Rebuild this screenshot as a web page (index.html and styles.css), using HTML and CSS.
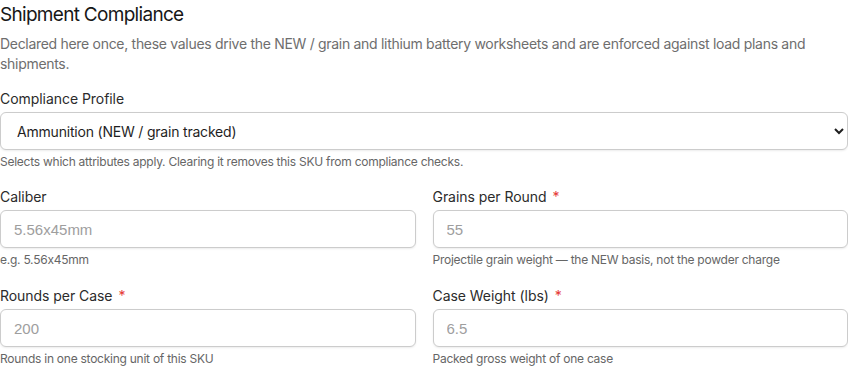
FILE: index.html
```html
<!DOCTYPE html>
<html lang="en">
<head>
    <meta charset="UTF-8">
    <meta name="viewport" content="width=device-width, initial-scale=1.0">
    <title>Shipment Compliance</title>
    <link rel="stylesheet" href="styles.css">
</head>
<body>
    <div class="compliance">
        <h2>Shipment Compliance</h2>
        <p class="intro">Declared here once, these values drive the NEW / grain and lithium battery worksheets and are enforced against load plans and shipments.</p>

        <div class="field">
            <label for="profile">Compliance Profile</label>
            <select id="profile">
                <option>Ammunition (NEW / grain tracked)</option>
            </select>
            <small>Selects which attributes apply. Clearing it removes this SKU from compliance checks.</small>
        </div>

        <div class="grid">
            <div class="field">
                <label for="caliber">Caliber</label>
                <input id="caliber" type="text" placeholder="5.56x45mm">
                <small>e.g. 5.56x45mm</small>
            </div>
            <div class="field">
                <label for="grains">Grains per Round <span class="req">*</span></label>
                <input id="grains" type="text" placeholder="55">
                <small>Projectile grain weight — the NEW basis, not the powder charge</small>
            </div>
            <div class="field">
                <label for="rounds">Rounds per Case <span class="req">*</span></label>
                <input id="rounds" type="text" placeholder="200">
                <small>Rounds in one stocking unit of this SKU</small>
            </div>
            <div class="field">
                <label for="weight">Case Weight (lbs) <span class="req">*</span></label>
                <input id="weight" type="text" placeholder="6.5">
                <small>Packed gross weight of one case</small>
            </div>
        </div>
    </div>
</body>
</html>
```

FILE: styles.css
```css
body {
    margin: 0;
    background-color: #FFFFFF;
    color: #1F1F1F;
    font-family: 'Inter', sans-serif;
}

.compliance {
    width: 848px;
}

h2 {
    margin: 4px 0 0;
    font-size: 19px;
    font-weight: 400;
    line-height: 22px;
    letter-spacing: -0.7px;
    color: #171717;
}

.intro {
    margin: 8px 0 15px;
    font-size: 14px;
    line-height: 20px;
    color: #6E6E6E;
    letter-spacing: -0.3px;
}

.field {
    display: flex;
    flex-direction: column;
    margin-bottom: 17px;
}

.field label {
    font-size: 14px;
    line-height: 20px;
    color: #2B2B2B;
    margin-bottom: 3px;
    letter-spacing: -0.05px;
}

.req {
    color: #E53935;
    margin-left: 2px;
}

.field small {
    font-size: 12px;
    line-height: 16px;
    color: #666666;
    margin-top: 4px;
    letter-spacing: -0.25px;
}

select,
input {
    box-sizing: border-box;
    height: 38px;
    border: 1px solid #CCCCCC;
    border-radius: 6px;
    background-color: #FFFFFF;
    box-shadow: 0 1px 2px rgba(0, 0, 0, 0.08);
}

select {
    width: 848px;
    padding: 0 12px;
    font-family: 'Inter', sans-serif;
    font-size: 14px;
    color: #1F1F1F;
    letter-spacing: -0.2px;
}

input {
    width: 100%;
    padding: 0 13px;
    font-family: 'Liberation Sans', sans-serif;
    font-size: 15px;
}

input::placeholder {
    color: #9E9E9E;
}

.grid {
    display: grid;
    grid-template-columns: 1fr 1fr;
    column-gap: 17px;
}

.grid .field {
    margin-bottom: 18px;
}
```
